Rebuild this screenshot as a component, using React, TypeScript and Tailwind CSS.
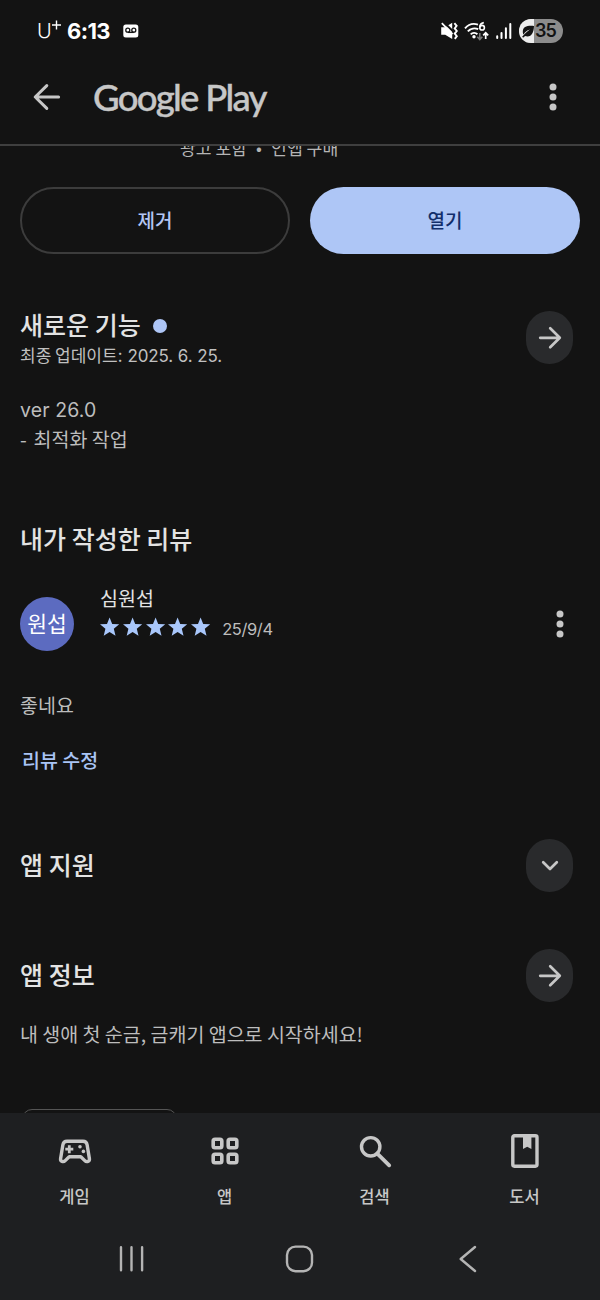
import * as React from "react";

interface INavItem {
  label: string;
  icon: React.ReactElement;
}

interface IRoundButtonProps {
  label: string;
  children: React.ReactNode;
}

const NAV_ITEMS: INavItem[] = [
  {
    label: "게임",
    icon: (
      <svg width="36" height="36" viewBox="0 0 36 36" fill="none">
        <path
          d="M10 8.3H26C28.2 8.3 29.7 9.6 30.1 11.7L32.4 25.6C32.9 28.6 29.6 29.5 27.8 27.6L23.8 23.7H12.2L8.2 27.6C6.4 29.5 3.1 28.6 3.6 25.6L5.9 11.7C6.3 9.6 7.8 8.3 10 8.3Z"
          stroke="currentColor"
          strokeWidth="3.4"
          strokeLinejoin="round"
        />
        <path d="M12.3 12.2V20.2M8.3 16.2H16.3" stroke="currentColor" strokeWidth="2.8" />
        <circle cx="23" cy="13.8" r="1.8" fill="currentColor" />
        <circle cx="26.4" cy="18.4" r="1.8" fill="currentColor" />
      </svg>
    ),
  },
  {
    label: "앱",
    icon: (
      <svg width="36" height="36" viewBox="0 0 36 36" fill="none" stroke="currentColor" strokeWidth="3.6">
        <rect x="6.2" y="6.2" width="8.6" height="8.6" rx="1.8" />
        <rect x="21.2" y="6.2" width="8.6" height="8.6" rx="1.8" />
        <rect x="6.2" y="21.2" width="8.6" height="8.6" rx="1.8" />
        <rect x="21.2" y="21.2" width="8.6" height="8.6" rx="1.8" />
      </svg>
    ),
  },
  {
    label: "검색",
    icon: (
      <svg width="36" height="36" viewBox="0 0 36 36" fill="none" stroke="currentColor">
        <circle cx="13.7" cy="13.8" r="9.2" strokeWidth="3.4" />
        <path d="M20.3 20.6L32.2 32.3" strokeWidth="3.8" strokeLinecap="round" />
      </svg>
    ),
  },
  {
    label: "도서",
    icon: (
      <svg width="36" height="36" viewBox="0 0 36 36" fill="none">
        <rect x="5.8" y="2.8" width="24.2" height="30.4" rx="1.6" stroke="currentColor" strokeWidth="3.4" />
        <path d="M16 3H24.4V16L20.2 13.8L16 16Z" fill="currentColor" />
      </svg>
    ),
  },
];

function StatusBar(): React.ReactElement {
  return (
    <div className="flex h-[62px] justify-between pl-[37px] pr-[37px] text-white">
      <div className="flex h-[62px] items-center">
        <span className="w-[15px] text-[20px] leading-none tracking-[-1px] font-['Inter',sans-serif] font-light">U</span>
        <svg className="mr-[6px] -mt-3" width="9" height="10" viewBox="0 0 9 10">
          <path d="M4.5 0.5V9.5M0 5H9" stroke="currentColor" strokeWidth="1.4" />
        </svg>
        <span className="w-[56px] whitespace-nowrap text-[22px] leading-none tracking-[-0.6px] font-['Inter',sans-serif] font-bold">
          6:13
        </span>
        <svg width="16" height="14" viewBox="0 0 16 14">
          <rect x="0.3" y="0.5" width="15" height="13" rx="2.5" fill="currentColor" />
          <g fill="none" stroke="#131313" strokeWidth="1.3">
            <circle cx="4.8" cy="6.2" r="2" />
            <circle cx="10.8" cy="6.2" r="2" />
            <path d="M4.8 8.4H10.8" />
          </g>
        </svg>
      </div>

      <div className="flex h-[62px] items-center">
        <svg className="mr-[6px]" width="18" height="18" viewBox="0 0 18 18">
          <path d="M1.2 5.2H5.2L12.2 0.8V17L5.2 12.8H1.2Z" fill="currentColor" />
          <path d="M3.6 0L13.5 9.8" stroke="#131313" strokeWidth="2" />
          <path d="M1.8 1.2L12.5 12.2" stroke="currentColor" strokeWidth="1.7" />
          <path
            d="M14.4 1.2L16.6 3.8L14.7 6.4L16.8 9L14.7 11.6L16.8 14.2L14.8 16.8"
            fill="none"
            stroke="currentColor"
            strokeWidth="1.9"
          />
        </svg>
        <svg className="mr-1.5" width="25" height="20" viewBox="0 0 25 20" fill="none">
          <g stroke="currentColor" strokeWidth="1.9">
            <path d="M1 7.3C4 3.8 9 2 14 3.6" />
            <path d="M3.8 10.4C6.6 7.3 11 6.7 14.2 8.2" />
            <path d="M6.7 13.4C8.5 11.6 11.4 11.4 13.4 13.2" />
          </g>
          <circle cx="10" cy="15.8" r="1.7" fill="currentColor" />
          <path d="M19.8 1.6C17.2 2 15.8 4.2 15.8 6.5" stroke="currentColor" strokeWidth="1.7" />
          <circle cx="18.1" cy="6.7" r="2.3" stroke="currentColor" strokeWidth="1.6" />
          <path d="M15.8 12V18.2M13.3 15.8L15.8 18.6L18.3 15.8" stroke="#777777" strokeWidth="1.6" />
          <path d="M21.7 18V12.2M19.2 14.4L21.7 11.8L24.2 14.4" stroke="currentColor" strokeWidth="1.7" />
        </svg>
        <svg className="mr-[7px]" width="17" height="18" viewBox="0 0 17 18" stroke="currentColor" strokeWidth="2" strokeLinecap="round">
          <path d="M2.2 14.3V16M6.5 11V16M10.9 6.3V16M15.3 2V16" />
        </svg>
        <div className="flex h-6 w-11 items-center overflow-hidden rounded-full bg-[#8c8c8c] text-[#131313]">
          <div className="flex h-6 w-[15px] shrink-0 items-center bg-[#ededed] pl-0.5">
            <svg width="13" height="13" viewBox="0 0 13 13">
              <path d="M13 1C6 0.4 2 1.8 1.8 6.4C1.8 7.8 2 8.6 2.6 9.6C4 7.2 5.8 5.6 9 4.6C6.4 6.6 3.4 9 1 12L2.6 12.4L4 11C10 13 12.8 8 13 1Z" fill="currentColor" />
            </svg>
          </div>
          <span className="ml-px text-[18px] leading-none tracking-[-1px] font-['Inter',sans-serif] font-semibold">
            35
          </span>
        </div>
      </div>
    </div>
  );
}

function MoreDots(): React.ReactElement {
  return (
    <svg width="8" height="28" viewBox="0 0 8 28" fill="currentColor">
      <circle cx="4" cy="4" r="3.5" />
      <circle cx="4" cy="14" r="3.5" />
      <circle cx="4" cy="24" r="3.5" />
    </svg>
  );
}

function RoundButton({ label, children }: IRoundButtonProps): React.ReactElement {
  return (
    <button
      aria-label={label}
      className="flex h-[53px] w-[47px] shrink-0 items-center justify-center rounded-full bg-[#292a2c] text-[#c7c7c7]"
    >
      {children}
    </button>
  );
}

function ArrowRight(): React.ReactElement {
  return (
    <svg width="24" height="24" viewBox="0 0 24 24" fill="none" stroke="currentColor" strokeWidth="2.7" strokeLinecap="round" strokeLinejoin="round">
      <path d="M2.2 11.8H21.5M12.2 2.3L21.8 11.8L12.2 21.3" />
    </svg>
  );
}

function Star(): React.ReactElement {
  return (
    <svg width="20" height="20" viewBox="0 0 20 20" fill="#a9c7fb">
      <path d="M9.6 0.6L12.2 6.9L19.2 7.3L13.8 11.8L15.5 18.7L9.6 15L3.7 18.7L5.4 11.8L0 7.3L7 6.9Z" />
    </svg>
  );
}

export default function App(): React.ReactElement {
  return (
    <div className="flex h-[1300px] w-[600px] flex-col overflow-hidden bg-[#131313] text-[#e3e3e3] font-['Noto_Sans_CJK_KR',sans-serif]">
      <header className="h-[146px] shrink-0 border-b-2 border-[#3f3f3f]">
        <StatusBar />
        <div className="flex h-[70px] items-center pl-[33px] pr-[43px] text-[#c7c7c7]">
          <svg width="28" height="28" viewBox="0 0 28 28" fill="none" stroke="currentColor" strokeWidth="3" strokeLinecap="round" strokeLinejoin="round">
            <path d="M25.6 14H2.5M13.8 2.6L2.2 14L13.8 25.4" />
          </svg>
          <h1 className="ml-8 flex-1 whitespace-nowrap text-[36.5px] leading-none tracking-[-1.7px] font-['Lato',sans-serif] font-medium [-webkit-text-stroke:0.4px_#c7c7c7]">
            Google Play
          </h1>
          <MoreDots />
        </div>
      </header>

      <main className="flex-1 overflow-hidden">
        <p className="-mt-[10px] flex h-6 gap-[9px] pl-[180px] text-[17.2px] leading-6 whitespace-nowrap text-[#b5b5b5]">
          <span>광고 포함</span>
          <span className="w-[6px]">•</span>
          <span>인앱 구매</span>
        </p>

        <div className="mt-[27px] flex gap-5 px-5 text-[19px] font-medium">
          <button className="h-[67px] w-[270px] rounded-full border-2 border-[#3c3c3c] text-[#b3c6f5]">제거</button>
          <button className="h-[67px] w-[270px] rounded-full bg-[#aec6f6] text-[#122e6b]">열기</button>
        </div>

        <section className="mt-[57px] pl-5 pr-[27px]">
          <div className="flex justify-between">
            <div>
              <h2 className="flex h-[26px] items-center text-[25px] leading-[26px] font-medium">
                새로운 기능
                <span className="mt-[4px] ml-3 h-3.5 w-3.5 rounded-full bg-[#aec6f6]" />
              </h2>
              <p className="mt-[3px] h-[30px] text-[17px] leading-[30px] text-[#c0c0c0]">
                최종 업데이트:<span className="ml-[5px] text-[17px] tracking-[-0.1px] font-['Inter',sans-serif]">2025. 6. 25.</span>
              </p>
            </div>
            <RoundButton label="새로운 기능">
              <ArrowRight />
            </RoundButton>
          </div>
          <div className="mt-[25px] text-[19.5px] leading-[30px] text-[#bdbdbd]">
            <p className="h-[29px] tracking-[0.1px] font-['Inter',sans-serif]">ver 26.0</p>
            <p className="h-[30px]">
              <span className="tracking-[1.2px]">- </span>최적화 작업
            </p>
          </div>
        </section>

        <section className="mt-[69px] pl-5 pr-9">
          <h2 className="text-[25px] leading-[30px] font-medium">내가 작성한 리뷰</h2>
          <div className="mt-[32px] flex h-[66px]">
            <div className="mt-3 flex h-[54px] w-[54px] shrink-0 items-center justify-center rounded-full bg-[#5c6bc0] pb-0.5 text-[21.5px] text-white">
              원섭
            </div>
            <div className="ml-[26px] flex-1">
              <p className="h-7 text-[19.5px] leading-[26px]">심원섭</p>
              <div className="flex h-7 items-center">
                <div className="flex gap-[2.8px]">
                  <Star />
                  <Star />
                  <Star />
                  <Star />
                  <Star />
                </div>
                <span className="mt-1 ml-[11px] text-[16.5px] leading-6 tracking-[-0.4px] text-[#bdbdbd] font-['Inter',sans-serif]">25/9/4</span>
              </div>
            </div>
            <div className="mt-[25px] text-[#c7c7c7]">
              <MoreDots />
            </div>
          </div>
          <p className="mt-[39px] text-[19.5px] leading-[30px] text-[#bdbdbd]">좋네요</p>
          <button className="mt-[25px] ml-[2px] block text-[19.5px] leading-[30px] font-medium text-[#a9c4f5]">
            리뷰 수정
          </button>
        </section>

        <section className="mt-[64px] flex items-center justify-between pl-5 pr-[27px]">
          <h2 className="pb-[3px] text-[25px] leading-[30px] font-medium">앱 지원</h2>
          <RoundButton label="앱 지원">
            <svg width="20" height="20" viewBox="0 0 20 20" fill="none" stroke="currentColor" strokeWidth="2.7" strokeLinecap="round" strokeLinejoin="round">
              <path d="M3.2 6.2L10 13L16.8 6.2" />
            </svg>
          </RoundButton>
        </section>

        <section className="mt-[57px] pl-5 pr-[27px]">
          <div className="flex items-center justify-between">
            <h2 className="pb-1 text-[25px] leading-[30px] font-medium">앱 정보</h2>
            <RoundButton label="앱 정보">
              <ArrowRight />
            </RoundButton>
          </div>
          <p className="mt-[17px] text-[19.5px] leading-[30px] whitespace-nowrap text-[#bdbdbd]">
            내 생애 첫 순금, 금캐기 앱으로 시작하세요!
          </p>
          <div className="mt-[60px] ml-0.5 h-10 w-[155px] rounded-[10px] border-[1.5px] border-[#555555]" />
        </section>
      </main>

      <footer className="h-[187px] shrink-0 bg-[#1e1f21] text-[#c7c7c7]">
        <nav className="flex pt-5">
          {NAV_ITEMS.map(function (item: INavItem) {
            return (
              <button key={item.label} className="flex flex-1 flex-col items-center">
                {item.icon}
                <span className="mt-[15px] mr-px text-[16.5px] leading-6 font-medium">{item.label}</span>
              </button>
            );
          })}
        </nav>
        <div className="mt-[36px] flex h-[30px] items-center pl-[117px]">
          <svg width="30" height="30" viewBox="0 0 30 30" stroke="#b4b4b4" strokeWidth="2.4" strokeLinecap="round">
            <path d="M4 3.2V26.2M14.5 3.2V26.2M25.1 3.2V26.2" />
          </svg>
          <svg className="ml-[137px]" width="30" height="30" viewBox="0 0 30 30" fill="none" stroke="#b4b4b4" strokeWidth="2.4">
            <rect x="3" y="2.6" width="25" height="24.6" rx="8.5" />
          </svg>
          <svg className="ml-[139px]" width="30" height="30" viewBox="0 0 30 30" fill="none" stroke="#b4b4b4" strokeWidth="2.4" strokeLinecap="round" strokeLinejoin="round">
            <path d="M22 3L7.7 15L22 27" />
          </svg>
        </div>
      </footer>
    </div>
  );
}
